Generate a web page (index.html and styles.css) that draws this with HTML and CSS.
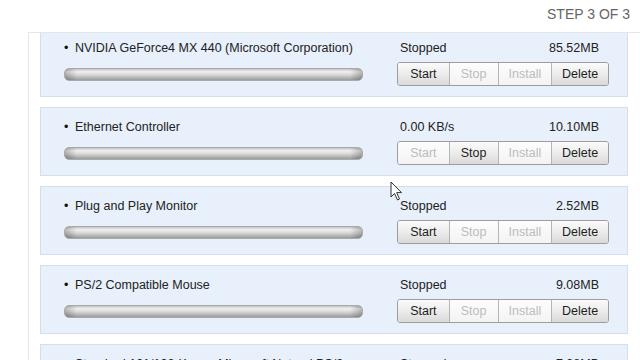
FILE: index.html
```html
<!DOCTYPE html>
<html lang="en">
<head>
    <meta charset="UTF-8">
    <title>Devices - Step 3 of 3</title>
    <link rel="stylesheet" href="styles.css">
</head>
<body>

<div class="step">Step 3 of 3</div>

<div class="panel">
    <div class="list">
        <div class="card">
            <div class="name">NVIDIA GeForce4 MX 440 (Microsoft Corporation)</div>
            <div class="info"><span>Stopped</span><span>85.52MB</span></div>
            <div class="bar"></div>
            <div class="buttons">
                <button class="b-start">Start</button>
                <button class="b-stop" disabled>Stop</button>
                <button class="b-install" disabled>Install</button>
                <button class="b-delete">Delete</button>
            </div>
        </div>
        <div class="card">
            <div class="name">Ethernet Controller</div>
            <div class="info"><span>0.00 KB/s</span><span>10.10MB</span></div>
            <div class="bar"></div>
            <div class="buttons">
                <button class="b-start" disabled>Start</button>
                <button class="b-stop">Stop</button>
                <button class="b-install" disabled>Install</button>
                <button class="b-delete">Delete</button>
            </div>
        </div>
        <div class="card">
            <div class="name">Plug and Play Monitor</div>
            <div class="info"><span>Stopped</span><span>2.52MB</span></div>
            <div class="bar"></div>
            <div class="buttons">
                <button class="b-start">Start</button>
                <button class="b-stop" disabled>Stop</button>
                <button class="b-install" disabled>Install</button>
                <button class="b-delete">Delete</button>
            </div>
        </div>
        <div class="card">
            <div class="name">PS/2 Compatible Mouse</div>
            <div class="info"><span>Stopped</span><span>9.08MB</span></div>
            <div class="bar"></div>
            <div class="buttons">
                <button class="b-start">Start</button>
                <button class="b-stop" disabled>Stop</button>
                <button class="b-install" disabled>Install</button>
                <button class="b-delete">Delete</button>
            </div>
        </div>
        <div class="card">
            <div class="name">Standard 101/102-Key or Microsoft Natural PS/2</div>
            <div class="info"><span>Stopped</span><span>7.98MB</span></div>
            <div class="bar"></div>
            <div class="buttons">
                <button class="b-start">Start</button>
                <button class="b-stop" disabled>Stop</button>
                <button class="b-install" disabled>Install</button>
                <button class="b-delete">Delete</button>
            </div>
        </div>
    </div>
</div>

<svg class="cursor" width="13" height="20" viewBox="0 0 13 20">
    <path d="M1 1 L1 16 L4.5 12.5 L7.5 19 L9.5 18 L6.7 11.6 L11.5 11.6 Z" fill="#fff" stroke="#333" stroke-width="1" stroke-linejoin="round"/>
</svg>

</body>
</html>
```

FILE: styles.css
```css
body {
    margin: 0;
    font-family: "Liberation Sans", Arial, sans-serif;
    font-size: 12.5px;
    color: #222;
    background: #fff;
    height: 360px;
    overflow: hidden;
    position: relative;
}

.step {
    height: 32px;
    line-height: 28px;
    text-align: right;
    padding-right: 10px;
    text-transform: uppercase;
    font-size: 14px;
    color: #666;
}

.panel {
    margin-left: 28px;
    margin-right: -20px;
    height: 327px;
    border-top: 1px solid #e3e6ea;
    border-left: 1px solid #e3e6ea;
    overflow: hidden;
}

.list {
    margin-top: -5px; /* scrolled a little */
    padding-left: 11px;
    display: flex;
    flex-direction: column;
    gap: 10px;
}

.card {
    width: 545px;
    padding: 11px 18px 10px 23px;
    background: #e8f0fb;
    border: 1px solid #d5dfec;
    display: grid;
    grid-template-columns: 299px 212px;
    grid-template-rows: 16px 24px;
    column-gap: 34px;
    row-gap: 6px;
}

.name {
    line-height: 16px;
    white-space: nowrap;
    overflow: hidden;
}

.name::before {
    content: "\2022";
    color: #111;
    display: inline-block;
    width: 11px;
}

.info {
    display: flex;
    justify-content: space-between;
    line-height: 16px;
    padding: 0 10px 0 3px;
}

.bar {
    align-self: center;
    height: 13px;
    border-radius: 5px;
    box-sizing: border-box;
    border: 1px solid #a9a9a9;
    background:
        linear-gradient(to right, rgba(0,0,0,.22), rgba(0,0,0,0) 4%, rgba(0,0,0,0) 96%, rgba(0,0,0,.22)),
        linear-gradient(#c4c4c4, #f0f0f0 25%, #d6d6d6 55%, #b5b5b5 80%, #9c9c9c);
}

.buttons {
    display: flex;
    border: 1px solid #9d9d9d;
    border-radius: 3px;
    overflow: hidden;
    box-sizing: border-box;
}

.buttons button {
    font-family: inherit;
    font-size: 12.5px;
    color: #1e1e1e;
    height: 22px;
    padding: 0;
    border: none;
    border-left: 1px solid #b5b5b5;
    background: linear-gradient(#fbfbfb, #ececec 50%, #d9d9d9);
}

.buttons button:first-child {
    border-left: none;
}

.buttons button:disabled {
    color: #bcbcbc;
    background: linear-gradient(#fdfdfd, #f3f3f3);
}

.b-start { width: 51px; }
.b-stop { width: 49px; }
.b-install { width: 54px; }
.b-delete { width: 57px; }

.cursor {
    position: absolute;
    left: 390px;
    top: 181px;
}
```
